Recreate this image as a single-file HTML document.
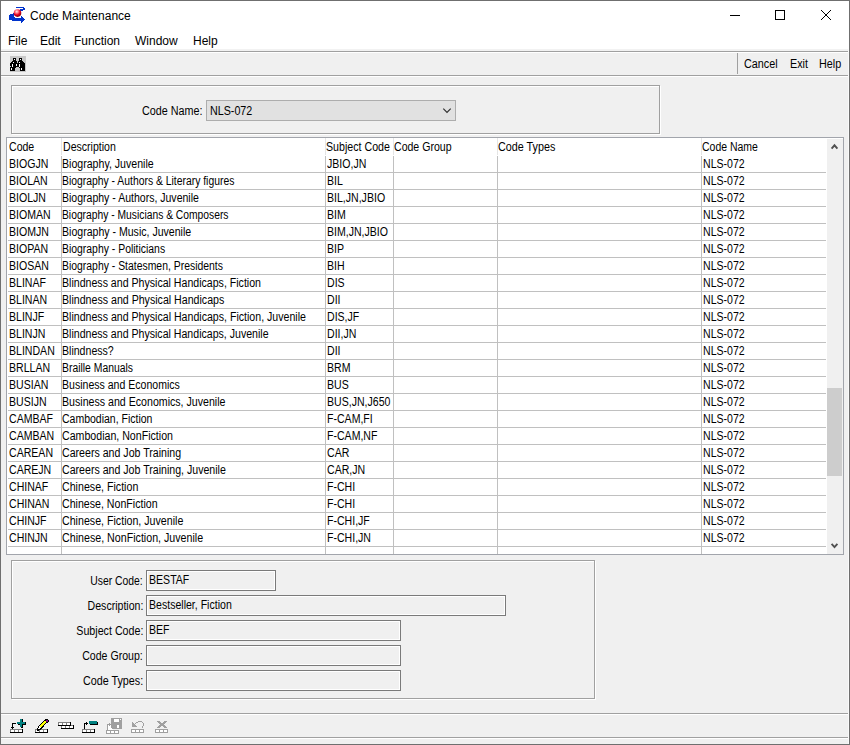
<!DOCTYPE html>
<html><head><meta charset="utf-8"><title>Code Maintenance</title>
<style>
html,body{margin:0;padding:0;}
body{width:850px;height:745px;position:relative;overflow:hidden;background:#f0f0f0;font-family:"Liberation Sans",sans-serif;color:#000;}
div{position:absolute;box-sizing:border-box;}
.t{font-size:12px;line-height:14px;white-space:nowrap;transform:scaleX(0.88);transform-origin:0 0;}
.tr{transform-origin:100% 0;}
.ui{font-size:12px;line-height:14px;white-space:nowrap;}
.win{left:0;top:0;width:850px;height:745px;border:1px solid #6f6f6f;}
.title{left:1px;top:1px;width:848px;height:50px;background:#fff;}
.hl{height:1px;background:#a0a0a0;}
.wl{height:1px;background:#fff;}
.grid{left:6px;top:137px;width:838px;height:418px;border:1px solid #a2a5ac;background:#fff;}
.hsep{top:138px;width:1px;height:17px;background:#e5e5e5;}
.vline{top:156px;width:1px;height:398px;background:#c0c0c0;}
.rline{left:8px;width:818px;height:1px;background:#c0c0c0;}
.sb{left:827px;top:139px;width:16px;height:415px;background:#f0f0f0;}
.thumb{left:827px;top:388px;width:15px;height:88px;background:#cdcdcd;}
.gb{border:1px solid #a0a0a0;}
.gbw{border:1px solid #fff;}
.tb{border:1px solid #7a7a7a;background:#f0f0f0;}
.tbi{border:1px solid #fff;}
</style></head><body>
<div class="title"></div>
<div class="win"></div>
<!-- title -->
<div class="ui" style="left:30px;top:9px">Code Maintenance</div>
<div style="left:730px;top:15px;width:10px;height:1px;background:#000"></div>
<div style="left:775px;top:10px;width:10px;height:10px;border:1px solid #000"></div>
<svg style="position:absolute;left:821px;top:10px" width="10" height="10" shape-rendering="crispEdges" fill="#000"><rect x="0" y="0" width="1" height="1"/><rect x="9" y="0" width="1" height="1"/><rect x="1" y="1" width="1" height="1"/><rect x="8" y="1" width="1" height="1"/><rect x="2" y="2" width="1" height="1"/><rect x="7" y="2" width="1" height="1"/><rect x="3" y="3" width="1" height="1"/><rect x="6" y="3" width="1" height="1"/><rect x="4" y="4" width="1" height="1"/><rect x="5" y="4" width="1" height="1"/><rect x="5" y="5" width="1" height="1"/><rect x="4" y="5" width="1" height="1"/><rect x="6" y="6" width="1" height="1"/><rect x="3" y="6" width="1" height="1"/><rect x="7" y="7" width="1" height="1"/><rect x="2" y="7" width="1" height="1"/><rect x="8" y="8" width="1" height="1"/><rect x="1" y="8" width="1" height="1"/><rect x="9" y="9" width="1" height="1"/><rect x="0" y="9" width="1" height="1"/></svg>
<!-- menu -->
<div class="ui" style="left:8px;top:34px">File</div>
<div class="ui" style="left:40px;top:34px">Edit</div>
<div class="ui" style="left:74px;top:34px">Function</div>
<div class="ui" style="left:135px;top:34px">Window</div>
<div class="ui" style="left:193px;top:34px">Help</div>
<div style="left:1px;top:49px;width:848px;height:2px;background:#f2f2f2"></div>
<div class="hl" style="left:1px;top:51px;width:847px"></div>
<div class="wl" style="left:1px;top:52px;width:847px"></div>
<div style="left:848px;top:49px;width:1px;height:695px;background:#fafafa"></div>
<!-- toolbar -->

<div style="left:737px;top:53px;width:1px;height:21px;background:#a0a0a0"></div>
<div class="t" style="left:744px;top:57px;transform:scaleX(0.9)">Cancel</div>
<div class="t" style="left:790px;top:57px;transform:scaleX(0.9)">Exit</div>
<div class="t" style="left:819px;top:57px;transform:scaleX(0.9)">Help</div>
<div class="hl" style="left:1px;top:75px;width:847px"></div>
<div class="wl" style="left:1px;top:76px;width:847px"></div>
<!-- group 1 -->
<div class="gbw" style="left:12px;top:86px;width:649px;height:49px"></div>
<div class="gb" style="left:11px;top:85px;width:649px;height:49px"></div>
<div class="t" style="left:142px;top:104px;transform:scaleX(0.898)">Code Name:</div>
<div style="left:206px;top:100px;width:250px;height:21px;border:1px solid #adadad;background:#e1e1e1"></div>
<div class="t" style="left:210px;top:104px;transform:scaleX(0.893)">NLS-072</div>

<!-- grid -->
<div class="grid"></div>
<div class="hsep" style="left:61px"></div>
<div class="hsep" style="left:325px"></div>
<div class="hsep" style="left:393px"></div>
<div class="hsep" style="left:497px"></div>
<div class="hsep" style="left:701px"></div>
<div class="vline" style="left:61px"></div>
<div class="vline" style="left:325px"></div>
<div class="vline" style="left:393px"></div>
<div class="vline" style="left:497px"></div>
<div class="vline" style="left:701px"></div>
<div class="rline" style="top:172px"></div>
<div class="rline" style="top:189px"></div>
<div class="rline" style="top:206px"></div>
<div class="rline" style="top:223px"></div>
<div class="rline" style="top:240px"></div>
<div class="rline" style="top:257px"></div>
<div class="rline" style="top:274px"></div>
<div class="rline" style="top:291px"></div>
<div class="rline" style="top:308px"></div>
<div class="rline" style="top:325px"></div>
<div class="rline" style="top:342px"></div>
<div class="rline" style="top:359px"></div>
<div class="rline" style="top:376px"></div>
<div class="rline" style="top:393px"></div>
<div class="rline" style="top:410px"></div>
<div class="rline" style="top:427px"></div>
<div class="rline" style="top:444px"></div>
<div class="rline" style="top:461px"></div>
<div class="rline" style="top:478px"></div>
<div class="rline" style="top:495px"></div>
<div class="rline" style="top:512px"></div>
<div class="rline" style="top:529px"></div>
<div class="rline" style="top:546px"></div>
<div class="t" style="left:8.5px;top:140px">Code</div>
<div class="t" style="left:62.6px;top:140px">Description</div>
<div class="t" style="left:326.3px;top:140px;transform:scaleX(0.887)">Subject Code</div>
<div class="t" style="left:394px;top:140px;transform:scaleX(0.88)">Code Group</div>
<div class="t" style="left:498px;top:140px;transform:scaleX(0.898)">Code Types</div>
<div class="t" style="left:702px;top:140px;transform:scaleX(0.873)">Code Name</div>
<div class="t" style="left:8.9px;top:157px">BIOGJN</div>
<div class="t" style="left:62.42px;top:157px;transform:scaleX(0.8825)">Biography, Juvenile</div>
<div class="t" style="left:326.6px;top:157px">JBIO,JN</div>
<div class="t" style="left:702.5px;top:157px">NLS-072</div>
<div class="t" style="left:8.9px;top:174px">BIOLAN</div>
<div class="t" style="left:62.44px;top:174px;transform:scaleX(0.8641)">Biography - Authors &amp; Literary figures</div>
<div class="t" style="left:326.6px;top:174px">BIL</div>
<div class="t" style="left:702.5px;top:174px">NLS-072</div>
<div class="t" style="left:8.9px;top:191px">BIOLJN</div>
<div class="t" style="left:62.42px;top:191px;transform:scaleX(0.8768)">Biography - Authors, Juvenile</div>
<div class="t" style="left:326.6px;top:191px">BIL,JN,JBIO</div>
<div class="t" style="left:702.5px;top:191px">NLS-072</div>
<div class="t" style="left:8.9px;top:208px">BIOMAN</div>
<div class="t" style="left:62.44px;top:208px;transform:scaleX(0.858)">Biography - Musicians &amp; Composers</div>
<div class="t" style="left:326.6px;top:208px">BIM</div>
<div class="t" style="left:702.5px;top:208px">NLS-072</div>
<div class="t" style="left:8.9px;top:225px">BIOMJN</div>
<div class="t" style="left:62.42px;top:225px;transform:scaleX(0.88)">Biography - Music, Juvenile</div>
<div class="t" style="left:326.6px;top:225px">BIM,JN,JBIO</div>
<div class="t" style="left:702.5px;top:225px">NLS-072</div>
<div class="t" style="left:8.9px;top:242px">BIOPAN</div>
<div class="t" style="left:62.43px;top:242px;transform:scaleX(0.8684)">Biography - Politicians</div>
<div class="t" style="left:326.6px;top:242px">BIP</div>
<div class="t" style="left:702.5px;top:242px">NLS-072</div>
<div class="t" style="left:8.9px;top:259px">BIOSAN</div>
<div class="t" style="left:62.43px;top:259px;transform:scaleX(0.8679)">Biography - Statesmen, Presidents</div>
<div class="t" style="left:326.6px;top:259px">BIH</div>
<div class="t" style="left:702.5px;top:259px">NLS-072</div>
<div class="t" style="left:8.9px;top:276px">BLINAF</div>
<div class="t" style="left:62.42px;top:276px;transform:scaleX(0.8826)">Blindness and Physical Handicaps, Fiction</div>
<div class="t" style="left:326.6px;top:276px">DIS</div>
<div class="t" style="left:702.5px;top:276px">NLS-072</div>
<div class="t" style="left:8.9px;top:293px">BLINAN</div>
<div class="t" style="left:62.42px;top:293px;transform:scaleX(0.8846)">Blindness and Physical Handicaps</div>
<div class="t" style="left:326.6px;top:293px">DII</div>
<div class="t" style="left:702.5px;top:293px">NLS-072</div>
<div class="t" style="left:8.9px;top:310px">BLINJF</div>
<div class="t" style="left:62.42px;top:310px;transform:scaleX(0.8833)">Blindness and Physical Handicaps, Fiction, Juvenile</div>
<div class="t" style="left:326.6px;top:310px">DIS,JF</div>
<div class="t" style="left:702.5px;top:310px">NLS-072</div>
<div class="t" style="left:8.9px;top:327px">BLINJN</div>
<div class="t" style="left:62.42px;top:327px;transform:scaleX(0.8824)">Blindness and Physical Handicaps, Juvenile</div>
<div class="t" style="left:326.6px;top:327px">DII,JN</div>
<div class="t" style="left:702.5px;top:327px">NLS-072</div>
<div class="t" style="left:8.9px;top:344px">BLINDAN</div>
<div class="t" style="left:62.42px;top:344px;transform:scaleX(0.8807)">Blindness?</div>
<div class="t" style="left:326.6px;top:344px">DII</div>
<div class="t" style="left:702.5px;top:344px">NLS-072</div>
<div class="t" style="left:8.9px;top:361px">BRLLAN</div>
<div class="t" style="left:62.43px;top:361px;transform:scaleX(0.8654)">Braille Manuals</div>
<div class="t" style="left:326.6px;top:361px">BRM</div>
<div class="t" style="left:702.5px;top:361px">NLS-072</div>
<div class="t" style="left:8.9px;top:378px">BUSIAN</div>
<div class="t" style="left:62.42px;top:378px;transform:scaleX(0.8789)">Business and Economics</div>
<div class="t" style="left:326.6px;top:378px">BUS</div>
<div class="t" style="left:702.5px;top:378px">NLS-072</div>
<div class="t" style="left:8.9px;top:395px">BUSIJN</div>
<div class="t" style="left:62.42px;top:395px;transform:scaleX(0.8847)">Business and Economics, Juvenile</div>
<div class="t" style="left:326.6px;top:395px">BUS,JN,J650</div>
<div class="t" style="left:702.5px;top:395px">NLS-072</div>
<div class="t" style="left:8.9px;top:412px">CAMBAF</div>
<div class="t" style="left:61.73px;top:412px;transform:scaleX(0.8745)">Cambodian, Fiction</div>
<div class="t" style="left:326.6px;top:412px">F-CAM,FI</div>
<div class="t" style="left:702.5px;top:412px">NLS-072</div>
<div class="t" style="left:8.9px;top:429px">CAMBAN</div>
<div class="t" style="left:61.72px;top:429px;transform:scaleX(0.8847)">Cambodian, NonFiction</div>
<div class="t" style="left:326.6px;top:429px">F-CAM,NF</div>
<div class="t" style="left:702.5px;top:429px">NLS-072</div>
<div class="t" style="left:8.9px;top:446px">CAREAN</div>
<div class="t" style="left:61.72px;top:446px;transform:scaleX(0.8842)">Careers and Job Training</div>
<div class="t" style="left:326.6px;top:446px">CAR</div>
<div class="t" style="left:702.5px;top:446px">NLS-072</div>
<div class="t" style="left:8.9px;top:463px">CAREJN</div>
<div class="t" style="left:61.72px;top:463px;transform:scaleX(0.8837)">Careers and Job Training, Juvenile</div>
<div class="t" style="left:326.6px;top:463px">CAR,JN</div>
<div class="t" style="left:702.5px;top:463px">NLS-072</div>
<div class="t" style="left:8.9px;top:480px">CHINAF</div>
<div class="t" style="left:61.71px;top:480px;transform:scaleX(0.8869)">Chinese, Fiction</div>
<div class="t" style="left:326.6px;top:480px">F-CHI</div>
<div class="t" style="left:702.5px;top:480px">NLS-072</div>
<div class="t" style="left:8.9px;top:497px">CHINAN</div>
<div class="t" style="left:61.71px;top:497px;transform:scaleX(0.885)">Chinese, NonFiction</div>
<div class="t" style="left:326.6px;top:497px">F-CHI</div>
<div class="t" style="left:702.5px;top:497px">NLS-072</div>
<div class="t" style="left:8.9px;top:514px">CHINJF</div>
<div class="t" style="left:61.71px;top:514px;transform:scaleX(0.8874)">Chinese, Fiction, Juvenile</div>
<div class="t" style="left:326.6px;top:514px">F-CHI,JF</div>
<div class="t" style="left:702.5px;top:514px">NLS-072</div>
<div class="t" style="left:8.9px;top:531px">CHINJN</div>
<div class="t" style="left:61.71px;top:531px;transform:scaleX(0.8892)">Chinese, NonFiction, Juvenile</div>
<div class="t" style="left:326.6px;top:531px">F-CHI,JN</div>
<div class="t" style="left:702.5px;top:531px">NLS-072</div>
<div class="sb"></div>
<div class="thumb"></div>


<!-- detail group -->
<div class="gbw" style="left:12px;top:561px;width:584px;height:139px"></div>
<div class="gb" style="left:11px;top:560px;width:584px;height:139px"></div>
<div class="t tr" style="right:707px;top:574px;transform:scaleX(0.865)">User Code:</div>
<div class="t tr" style="right:707px;top:599px">Description:</div>
<div class="t tr" style="right:707px;top:624px;transform:scaleX(0.89)">Subject Code:</div>
<div class="t tr" style="right:707px;top:649px">Code Group:</div>
<div class="t tr" style="right:707px;top:674px;transform:scaleX(0.897)">Code Types:</div>
<div class="tb" style="left:146px;top:570px;width:130px;height:21px"><div class="tbi" style="left:0;top:0;right:0;bottom:0"></div></div>
<div class="tb" style="left:146px;top:595px;width:360px;height:21px"><div class="tbi" style="left:0;top:0;right:0;bottom:0"></div></div>
<div class="tb" style="left:146px;top:620px;width:255px;height:21px"><div class="tbi" style="left:0;top:0;right:0;bottom:0"></div></div>
<div class="tb" style="left:146px;top:645px;width:255px;height:21px"><div class="tbi" style="left:0;top:0;right:0;bottom:0"></div></div>
<div class="tb" style="left:146px;top:670px;width:255px;height:21px"><div class="tbi" style="left:0;top:0;right:0;bottom:0"></div></div>
<div class="t" style="left:149px;top:573px">BESTAF</div>
<div class="t" style="left:149px;top:598px">Bestseller, Fiction</div>
<div class="t" style="left:149px;top:623px">BEF</div>
<!-- bottom toolbar -->
<div class="hl" style="left:1px;top:713px;width:847px"></div>
<div class="wl" style="left:1px;top:714px;width:847px"></div>
<div class="hl" style="left:1px;top:737px;width:847px"></div>
<div class="wl" style="left:1px;top:738px;width:847px"></div>
<svg style="position:absolute;left:8px;top:6px" width="17" height="17" shape-rendering="crispEdges"><rect x="8" y="1" width="8" height="1" fill="#0033cc"/><rect x="15" y="2" width="2" height="1" fill="#0033cc"/><rect x="12" y="3" width="5" height="1" fill="#0033cc"/><rect x="12" y="4" width="3" height="1" fill="#0033cc"/><rect x="5" y="7" width="1" height="1" fill="#0033cc"/><rect x="2" y="8" width="4" height="1" fill="#0033cc"/><rect x="1" y="9" width="5" height="1" fill="#0033cc"/><rect x="1" y="10" width="5" height="1" fill="#0033cc"/><rect x="13" y="10" width="1" height="1" fill="#0033cc"/><rect x="1" y="11" width="6" height="1" fill="#0033cc"/><rect x="13" y="11" width="2" height="1" fill="#0033cc"/><rect x="1" y="12" width="15" height="1" fill="#0033cc"/><rect x="1" y="13" width="16" height="1" fill="#0033cc"/><rect x="4" y="14" width="12" height="1" fill="#0033cc"/><rect x="13" y="15" width="2" height="1" fill="#0033cc"/><rect x="13" y="16" width="1" height="1" fill="#0033cc"/></svg><svg style="position:absolute;left:8px;top:6px" width="20" height="20"><defs><radialGradient id="ball" cx="0.4" cy="0.3" r="0.8"><stop offset="0" stop-color="#ffe8e8"/><stop offset="0.3" stop-color="#ff6a78"/><stop offset="0.55" stop-color="#e00020"/><stop offset="0.85" stop-color="#8a0010"/><stop offset="1" stop-color="#500008"/></radialGradient></defs><circle cx="9.5" cy="7.1" r="3.8" fill="url(#ball)"/></svg><svg style="position:absolute;left:10px;top:56px" width="16" height="16" shape-rendering="crispEdges"><rect x="0" y="0" width="16" height="1" fill="#c8c8c8"/><rect x="0" y="1" width="16" height="1" fill="#c8c8c8"/><rect x="0" y="2" width="3" height="1" fill="#c8c8c8"/><rect x="3" y="2" width="3" height="1" fill="#000000"/><rect x="6" y="2" width="3" height="1" fill="#c8c8c8"/><rect x="9" y="2" width="3" height="1" fill="#000000"/><rect x="12" y="2" width="4" height="1" fill="#c8c8c8"/><rect x="0" y="3" width="3" height="1" fill="#c8c8c8"/><rect x="3" y="3" width="1" height="1" fill="#000000"/><rect x="4" y="3" width="1" height="1" fill="#ffffff"/><rect x="5" y="3" width="1" height="1" fill="#000000"/><rect x="6" y="3" width="3" height="1" fill="#c8c8c8"/><rect x="9" y="3" width="1" height="1" fill="#000000"/><rect x="10" y="3" width="1" height="1" fill="#ffffff"/><rect x="11" y="3" width="1" height="1" fill="#000000"/><rect x="12" y="3" width="4" height="1" fill="#c8c8c8"/><rect x="0" y="4" width="3" height="1" fill="#c8c8c8"/><rect x="3" y="4" width="3" height="1" fill="#000000"/><rect x="6" y="4" width="3" height="1" fill="#c8c8c8"/><rect x="9" y="4" width="3" height="1" fill="#000000"/><rect x="12" y="4" width="4" height="1" fill="#c8c8c8"/><rect x="0" y="5" width="2" height="1" fill="#c8c8c8"/><rect x="2" y="5" width="5" height="1" fill="#000000"/><rect x="7" y="5" width="1" height="1" fill="#c8c8c8"/><rect x="8" y="5" width="5" height="1" fill="#000000"/><rect x="13" y="5" width="3" height="1" fill="#c8c8c8"/><rect x="0" y="6" width="1" height="1" fill="#c8c8c8"/><rect x="1" y="6" width="2" height="1" fill="#000000"/><rect x="3" y="6" width="1" height="1" fill="#ffffff"/><rect x="4" y="6" width="3" height="1" fill="#000000"/><rect x="7" y="6" width="1" height="1" fill="#c8c8c8"/><rect x="8" y="6" width="1" height="1" fill="#000000"/><rect x="9" y="6" width="1" height="1" fill="#ffffff"/><rect x="10" y="6" width="4" height="1" fill="#000000"/><rect x="14" y="6" width="2" height="1" fill="#c8c8c8"/><rect x="0" y="7" width="15" height="1" fill="#000000"/><rect x="15" y="7" width="1" height="1" fill="#c8c8c8"/><rect x="0" y="8" width="2" height="1" fill="#000000"/><rect x="2" y="8" width="1" height="1" fill="#ffffff"/><rect x="3" y="8" width="3" height="1" fill="#000000"/><rect x="6" y="8" width="1" height="1" fill="#ffffff"/><rect x="7" y="8" width="2" height="1" fill="#000000"/><rect x="9" y="8" width="1" height="1" fill="#ffffff"/><rect x="10" y="8" width="5" height="1" fill="#000000"/><rect x="15" y="8" width="1" height="1" fill="#c8c8c8"/><rect x="0" y="9" width="2" height="1" fill="#000000"/><rect x="2" y="9" width="1" height="1" fill="#ffffff"/><rect x="3" y="9" width="3" height="1" fill="#000000"/><rect x="6" y="9" width="1" height="1" fill="#ffffff"/><rect x="7" y="9" width="2" height="1" fill="#000000"/><rect x="9" y="9" width="1" height="1" fill="#ffffff"/><rect x="10" y="9" width="5" height="1" fill="#000000"/><rect x="15" y="9" width="1" height="1" fill="#c8c8c8"/><rect x="0" y="10" width="1" height="1" fill="#c8c8c8"/><rect x="1" y="10" width="1" height="1" fill="#000000"/><rect x="2" y="10" width="1" height="1" fill="#ffffff"/><rect x="3" y="10" width="6" height="1" fill="#000000"/><rect x="9" y="10" width="1" height="1" fill="#ffffff"/><rect x="10" y="10" width="5" height="1" fill="#000000"/><rect x="15" y="10" width="1" height="1" fill="#c8c8c8"/><rect x="0" y="11" width="6" height="1" fill="#000000"/><rect x="6" y="11" width="3" height="1" fill="#c8c8c8"/><rect x="9" y="11" width="6" height="1" fill="#000000"/><rect x="15" y="11" width="1" height="1" fill="#c8c8c8"/><rect x="0" y="12" width="1" height="1" fill="#000000"/><rect x="1" y="12" width="1" height="1" fill="#ffffff"/><rect x="2" y="12" width="3" height="1" fill="#000000"/><rect x="5" y="12" width="5" height="1" fill="#c8c8c8"/><rect x="10" y="12" width="1" height="1" fill="#000000"/><rect x="11" y="12" width="1" height="1" fill="#ffffff"/><rect x="12" y="12" width="3" height="1" fill="#000000"/><rect x="15" y="12" width="1" height="1" fill="#c8c8c8"/><rect x="0" y="13" width="1" height="1" fill="#000000"/><rect x="1" y="13" width="1" height="1" fill="#ffffff"/><rect x="2" y="13" width="3" height="1" fill="#000000"/><rect x="5" y="13" width="5" height="1" fill="#c8c8c8"/><rect x="10" y="13" width="1" height="1" fill="#000000"/><rect x="11" y="13" width="1" height="1" fill="#ffffff"/><rect x="12" y="13" width="3" height="1" fill="#000000"/><rect x="15" y="13" width="1" height="1" fill="#c8c8c8"/><rect x="0" y="14" width="5" height="1" fill="#000000"/><rect x="5" y="14" width="5" height="1" fill="#c8c8c8"/><rect x="10" y="14" width="5" height="1" fill="#000000"/><rect x="15" y="14" width="1" height="1" fill="#c8c8c8"/><rect x="0" y="15" width="16" height="1" fill="#c8c8c8"/></svg><svg style="position:absolute;left:9px;top:717px" width="17" height="16" shape-rendering="crispEdges"><rect x="11" y="2" width="2" height="1" fill="#008080"/><rect x="13" y="2" width="1" height="1" fill="#000000"/><rect x="11" y="3" width="2" height="1" fill="#008080"/><rect x="13" y="3" width="1" height="1" fill="#000000"/><rect x="11" y="4" width="2" height="1" fill="#008080"/><rect x="13" y="4" width="1" height="1" fill="#000000"/><rect x="8" y="5" width="8" height="1" fill="#008080"/><rect x="16" y="5" width="1" height="1" fill="#000000"/><rect x="3" y="6" width="4" height="1" fill="#000000"/><rect x="8" y="6" width="8" height="1" fill="#008080"/><rect x="16" y="6" width="1" height="1" fill="#000000"/><rect x="3" y="7" width="1" height="1" fill="#000000"/><rect x="9" y="7" width="2" height="1" fill="#000000"/><rect x="11" y="7" width="2" height="1" fill="#008080"/><rect x="13" y="7" width="4" height="1" fill="#000000"/><rect x="3" y="8" width="1" height="1" fill="#000000"/><rect x="11" y="8" width="2" height="1" fill="#008080"/><rect x="13" y="8" width="1" height="1" fill="#000000"/><rect x="3" y="9" width="1" height="1" fill="#000000"/><rect x="11" y="9" width="2" height="1" fill="#008080"/><rect x="13" y="9" width="1" height="1" fill="#000000"/><rect x="2" y="10" width="3" height="1" fill="#000000"/><rect x="12" y="10" width="2" height="1" fill="#000000"/><rect x="3" y="11" width="1" height="1" fill="#000000"/><rect x="1" y="12" width="12" height="1" fill="#808080"/><rect x="13" y="12" width="1" height="1" fill="#000000"/><rect x="1" y="13" width="1" height="1" fill="#808080"/><rect x="2" y="13" width="3" height="1" fill="#ffffff"/><rect x="5" y="13" width="1" height="1" fill="#808080"/><rect x="6" y="13" width="3" height="1" fill="#ffffff"/><rect x="9" y="13" width="1" height="1" fill="#808080"/><rect x="10" y="13" width="3" height="1" fill="#ffffff"/><rect x="13" y="13" width="1" height="1" fill="#000000"/><rect x="1" y="14" width="1" height="1" fill="#808080"/><rect x="2" y="14" width="3" height="1" fill="#ffffff"/><rect x="5" y="14" width="1" height="1" fill="#808080"/><rect x="6" y="14" width="3" height="1" fill="#ffffff"/><rect x="9" y="14" width="1" height="1" fill="#808080"/><rect x="10" y="14" width="3" height="1" fill="#ffffff"/><rect x="13" y="14" width="1" height="1" fill="#000000"/><rect x="1" y="15" width="13" height="1" fill="#000000"/></svg><svg style="position:absolute;left:33px;top:717px" width="16" height="16" shape-rendering="crispEdges"><rect x="12" y="2" width="3" height="1" fill="#000000"/><rect x="11" y="3" width="2" height="1" fill="#000000"/><rect x="13" y="3" width="2" height="1" fill="#800080"/><rect x="15" y="3" width="1" height="1" fill="#000000"/><rect x="10" y="4" width="1" height="1" fill="#000000"/><rect x="11" y="4" width="2" height="1" fill="#ffff00"/><rect x="13" y="4" width="2" height="1" fill="#800080"/><rect x="15" y="4" width="1" height="1" fill="#000000"/><rect x="9" y="5" width="1" height="1" fill="#000000"/><rect x="10" y="5" width="3" height="1" fill="#ffff00"/><rect x="13" y="5" width="2" height="1" fill="#000000"/><rect x="8" y="6" width="1" height="1" fill="#000000"/><rect x="9" y="6" width="3" height="1" fill="#ffff00"/><rect x="12" y="6" width="1" height="1" fill="#000000"/><rect x="7" y="7" width="1" height="1" fill="#000000"/><rect x="8" y="7" width="3" height="1" fill="#ffff00"/><rect x="11" y="7" width="1" height="1" fill="#000000"/><rect x="6" y="8" width="1" height="1" fill="#000000"/><rect x="7" y="8" width="3" height="1" fill="#ffff00"/><rect x="10" y="8" width="1" height="1" fill="#000000"/><rect x="5" y="9" width="1" height="1" fill="#000000"/><rect x="6" y="9" width="1" height="1" fill="#ffffff"/><rect x="7" y="9" width="2" height="1" fill="#ffff00"/><rect x="9" y="9" width="2" height="1" fill="#000000"/><rect x="5" y="10" width="1" height="1" fill="#000000"/><rect x="6" y="10" width="2" height="1" fill="#ffffff"/><rect x="8" y="10" width="2" height="1" fill="#000000"/><rect x="4" y="11" width="1" height="1" fill="#000000"/><rect x="5" y="11" width="2" height="1" fill="#ffffff"/><rect x="7" y="11" width="2" height="1" fill="#000000"/><rect x="2" y="12" width="2" height="1" fill="#808080"/><rect x="4" y="12" width="4" height="1" fill="#000000"/><rect x="8" y="12" width="6" height="1" fill="#808080"/><rect x="14" y="12" width="1" height="1" fill="#000000"/><rect x="2" y="13" width="1" height="1" fill="#808080"/><rect x="3" y="13" width="1" height="1" fill="#ffffff"/><rect x="4" y="13" width="2" height="1" fill="#000000"/><rect x="6" y="13" width="1" height="1" fill="#808080"/><rect x="7" y="13" width="3" height="1" fill="#ffffff"/><rect x="10" y="13" width="1" height="1" fill="#808080"/><rect x="11" y="13" width="3" height="1" fill="#ffffff"/><rect x="14" y="13" width="1" height="1" fill="#000000"/><rect x="2" y="14" width="1" height="1" fill="#808080"/><rect x="3" y="14" width="3" height="1" fill="#ffffff"/><rect x="6" y="14" width="1" height="1" fill="#808080"/><rect x="7" y="14" width="3" height="1" fill="#ffffff"/><rect x="10" y="14" width="1" height="1" fill="#808080"/><rect x="11" y="14" width="3" height="1" fill="#ffffff"/><rect x="14" y="14" width="1" height="1" fill="#000000"/><rect x="2" y="15" width="13" height="1" fill="#000000"/></svg><svg style="position:absolute;left:56px;top:719px" width="18" height="10" shape-rendering="crispEdges"><rect x="2" y="3" width="12" height="1" fill="#808080"/><rect x="14" y="3" width="1" height="1" fill="#000000"/><rect x="2" y="4" width="1" height="1" fill="#808080"/><rect x="3" y="4" width="3" height="1" fill="#ffffff"/><rect x="6" y="4" width="1" height="1" fill="#808080"/><rect x="7" y="4" width="3" height="1" fill="#ffffff"/><rect x="10" y="4" width="1" height="1" fill="#808080"/><rect x="11" y="4" width="3" height="1" fill="#ffffff"/><rect x="14" y="4" width="1" height="1" fill="#000000"/><rect x="2" y="5" width="1" height="1" fill="#808080"/><rect x="3" y="5" width="3" height="1" fill="#ffffff"/><rect x="6" y="5" width="1" height="1" fill="#808080"/><rect x="7" y="5" width="3" height="1" fill="#ffffff"/><rect x="10" y="5" width="1" height="1" fill="#808080"/><rect x="11" y="5" width="3" height="1" fill="#ffffff"/><rect x="14" y="5" width="1" height="1" fill="#000000"/><rect x="2" y="6" width="13" height="1" fill="#000000"/><rect x="15" y="6" width="2" height="1" fill="#808080"/><rect x="17" y="6" width="1" height="1" fill="#000000"/><rect x="5" y="7" width="1" height="1" fill="#808080"/><rect x="6" y="7" width="3" height="1" fill="#ffffff"/><rect x="9" y="7" width="1" height="1" fill="#808080"/><rect x="10" y="7" width="3" height="1" fill="#ffffff"/><rect x="13" y="7" width="1" height="1" fill="#808080"/><rect x="14" y="7" width="3" height="1" fill="#ffffff"/><rect x="17" y="7" width="1" height="1" fill="#000000"/><rect x="5" y="8" width="1" height="1" fill="#808080"/><rect x="6" y="8" width="3" height="1" fill="#ffffff"/><rect x="9" y="8" width="1" height="1" fill="#808080"/><rect x="10" y="8" width="3" height="1" fill="#ffffff"/><rect x="13" y="8" width="1" height="1" fill="#808080"/><rect x="14" y="8" width="3" height="1" fill="#ffffff"/><rect x="17" y="8" width="1" height="1" fill="#000000"/><rect x="5" y="9" width="13" height="1" fill="#000000"/></svg><svg style="position:absolute;left:80px;top:717px" width="18" height="16" shape-rendering="crispEdges"><rect x="9" y="4" width="8" height="1" fill="#008080"/><rect x="6" y="5" width="1" height="1" fill="#000000"/><rect x="9" y="5" width="8" height="1" fill="#008080"/><rect x="17" y="5" width="1" height="1" fill="#000000"/><rect x="4" y="6" width="4" height="1" fill="#000000"/><rect x="9" y="6" width="8" height="1" fill="#008080"/><rect x="17" y="6" width="1" height="1" fill="#000000"/><rect x="4" y="7" width="1" height="1" fill="#000000"/><rect x="6" y="7" width="1" height="1" fill="#000000"/><rect x="10" y="7" width="8" height="1" fill="#000000"/><rect x="4" y="8" width="1" height="1" fill="#000000"/><rect x="4" y="9" width="1" height="1" fill="#000000"/><rect x="4" y="10" width="1" height="1" fill="#000000"/><rect x="4" y="11" width="1" height="1" fill="#000000"/><rect x="2" y="12" width="12" height="1" fill="#808080"/><rect x="14" y="12" width="1" height="1" fill="#000000"/><rect x="2" y="13" width="1" height="1" fill="#808080"/><rect x="3" y="13" width="3" height="1" fill="#ffffff"/><rect x="6" y="13" width="1" height="1" fill="#808080"/><rect x="7" y="13" width="3" height="1" fill="#ffffff"/><rect x="10" y="13" width="1" height="1" fill="#808080"/><rect x="11" y="13" width="3" height="1" fill="#ffffff"/><rect x="14" y="13" width="1" height="1" fill="#000000"/><rect x="2" y="14" width="1" height="1" fill="#808080"/><rect x="3" y="14" width="3" height="1" fill="#ffffff"/><rect x="6" y="14" width="1" height="1" fill="#808080"/><rect x="7" y="14" width="3" height="1" fill="#ffffff"/><rect x="10" y="14" width="1" height="1" fill="#808080"/><rect x="11" y="14" width="3" height="1" fill="#ffffff"/><rect x="14" y="14" width="1" height="1" fill="#000000"/><rect x="2" y="15" width="13" height="1" fill="#000000"/></svg><svg style="position:absolute;left:104px;top:716px" width="18" height="18" shape-rendering="crispEdges"><rect x="7" y="2" width="11" height="1" fill="#a0a0a0"/><rect x="7" y="3" width="3" height="1" fill="#a0a0a0"/><rect x="10" y="3" width="5" height="1" fill="#ffffff"/><rect x="15" y="3" width="1" height="1" fill="#a0a0a0"/><rect x="16" y="3" width="1" height="1" fill="#ffffff"/><rect x="17" y="3" width="1" height="1" fill="#a0a0a0"/><rect x="7" y="4" width="3" height="1" fill="#a0a0a0"/><rect x="10" y="4" width="5" height="1" fill="#ffffff"/><rect x="15" y="4" width="3" height="1" fill="#a0a0a0"/><rect x="7" y="5" width="3" height="1" fill="#a0a0a0"/><rect x="10" y="5" width="5" height="1" fill="#ffffff"/><rect x="15" y="5" width="3" height="1" fill="#a0a0a0"/><rect x="7" y="6" width="11" height="1" fill="#a0a0a0"/><rect x="5" y="7" width="1" height="1" fill="#a0a0a0"/><rect x="7" y="7" width="11" height="1" fill="#a0a0a0"/><rect x="3" y="8" width="15" height="1" fill="#a0a0a0"/><rect x="3" y="9" width="1" height="1" fill="#a0a0a0"/><rect x="4" y="9" width="1" height="1" fill="#ffffff"/><rect x="5" y="9" width="1" height="1" fill="#a0a0a0"/><rect x="6" y="9" width="1" height="1" fill="#ffffff"/><rect x="7" y="9" width="6" height="1" fill="#a0a0a0"/><rect x="13" y="9" width="2" height="1" fill="#ffffff"/><rect x="15" y="9" width="3" height="1" fill="#a0a0a0"/><rect x="3" y="10" width="1" height="1" fill="#a0a0a0"/><rect x="4" y="10" width="3" height="1" fill="#ffffff"/><rect x="7" y="10" width="6" height="1" fill="#a0a0a0"/><rect x="13" y="10" width="2" height="1" fill="#ffffff"/><rect x="15" y="10" width="3" height="1" fill="#a0a0a0"/><rect x="3" y="11" width="1" height="1" fill="#a0a0a0"/><rect x="4" y="11" width="3" height="1" fill="#ffffff"/><rect x="7" y="11" width="6" height="1" fill="#a0a0a0"/><rect x="13" y="11" width="2" height="1" fill="#ffffff"/><rect x="15" y="11" width="3" height="1" fill="#a0a0a0"/><rect x="3" y="12" width="1" height="1" fill="#a0a0a0"/><rect x="4" y="12" width="4" height="1" fill="#ffffff"/><rect x="8" y="12" width="10" height="1" fill="#a0a0a0"/><rect x="3" y="13" width="1" height="1" fill="#a0a0a0"/><rect x="4" y="13" width="5" height="1" fill="#ffffff"/><rect x="2" y="14" width="13" height="1" fill="#a0a0a0"/><rect x="2" y="15" width="1" height="1" fill="#a0a0a0"/><rect x="3" y="15" width="3" height="1" fill="#ffffff"/><rect x="6" y="15" width="1" height="1" fill="#a0a0a0"/><rect x="7" y="15" width="3" height="1" fill="#ffffff"/><rect x="10" y="15" width="1" height="1" fill="#a0a0a0"/><rect x="11" y="15" width="3" height="1" fill="#ffffff"/><rect x="14" y="15" width="1" height="1" fill="#a0a0a0"/><rect x="2" y="16" width="1" height="1" fill="#a0a0a0"/><rect x="3" y="16" width="3" height="1" fill="#ffffff"/><rect x="6" y="16" width="1" height="1" fill="#a0a0a0"/><rect x="7" y="16" width="3" height="1" fill="#ffffff"/><rect x="10" y="16" width="1" height="1" fill="#a0a0a0"/><rect x="11" y="16" width="3" height="1" fill="#ffffff"/><rect x="14" y="16" width="1" height="1" fill="#a0a0a0"/><rect x="2" y="17" width="13" height="1" fill="#a0a0a0"/></svg><svg style="position:absolute;left:129px;top:718px" width="15" height="15" shape-rendering="crispEdges"><rect x="9" y="3" width="4" height="1" fill="#a0a0a0"/><rect x="3" y="4" width="1" height="1" fill="#a0a0a0"/><rect x="7" y="4" width="2" height="1" fill="#a0a0a0"/><rect x="13" y="4" width="1" height="1" fill="#a0a0a0"/><rect x="3" y="5" width="2" height="1" fill="#a0a0a0"/><rect x="6" y="5" width="1" height="1" fill="#a0a0a0"/><rect x="14" y="5" width="1" height="1" fill="#a0a0a0"/><rect x="3" y="6" width="3" height="1" fill="#a0a0a0"/><rect x="14" y="6" width="1" height="1" fill="#a0a0a0"/><rect x="3" y="7" width="4" height="1" fill="#a0a0a0"/><rect x="14" y="7" width="1" height="1" fill="#a0a0a0"/><rect x="3" y="8" width="5" height="1" fill="#a0a0a0"/><rect x="13" y="8" width="1" height="1" fill="#a0a0a0"/><rect x="13" y="9" width="1" height="1" fill="#a0a0a0"/><rect x="2" y="11" width="13" height="1" fill="#a0a0a0"/><rect x="2" y="12" width="1" height="1" fill="#a0a0a0"/><rect x="3" y="12" width="3" height="1" fill="#ffffff"/><rect x="6" y="12" width="1" height="1" fill="#a0a0a0"/><rect x="7" y="12" width="3" height="1" fill="#ffffff"/><rect x="10" y="12" width="1" height="1" fill="#a0a0a0"/><rect x="11" y="12" width="3" height="1" fill="#ffffff"/><rect x="14" y="12" width="1" height="1" fill="#a0a0a0"/><rect x="2" y="13" width="1" height="1" fill="#a0a0a0"/><rect x="3" y="13" width="3" height="1" fill="#ffffff"/><rect x="6" y="13" width="1" height="1" fill="#a0a0a0"/><rect x="7" y="13" width="3" height="1" fill="#ffffff"/><rect x="10" y="13" width="1" height="1" fill="#a0a0a0"/><rect x="11" y="13" width="3" height="1" fill="#ffffff"/><rect x="14" y="13" width="1" height="1" fill="#a0a0a0"/><rect x="2" y="14" width="13" height="1" fill="#a0a0a0"/></svg><svg style="position:absolute;left:153px;top:718px" width="15" height="15" shape-rendering="crispEdges"><rect x="4" y="3" width="3" height="1" fill="#a0a0a0"/><rect x="11" y="3" width="3" height="1" fill="#a0a0a0"/><rect x="5" y="4" width="3" height="1" fill="#a0a0a0"/><rect x="10" y="4" width="3" height="1" fill="#a0a0a0"/><rect x="6" y="5" width="6" height="1" fill="#a0a0a0"/><rect x="7" y="6" width="4" height="1" fill="#a0a0a0"/><rect x="6" y="7" width="6" height="1" fill="#a0a0a0"/><rect x="5" y="8" width="3" height="1" fill="#a0a0a0"/><rect x="10" y="8" width="3" height="1" fill="#a0a0a0"/><rect x="4" y="9" width="3" height="1" fill="#a0a0a0"/><rect x="11" y="9" width="3" height="1" fill="#a0a0a0"/><rect x="2" y="11" width="13" height="1" fill="#a0a0a0"/><rect x="2" y="12" width="1" height="1" fill="#a0a0a0"/><rect x="3" y="12" width="3" height="1" fill="#ffffff"/><rect x="6" y="12" width="1" height="1" fill="#a0a0a0"/><rect x="7" y="12" width="3" height="1" fill="#ffffff"/><rect x="10" y="12" width="1" height="1" fill="#a0a0a0"/><rect x="11" y="12" width="3" height="1" fill="#ffffff"/><rect x="14" y="12" width="1" height="1" fill="#a0a0a0"/><rect x="2" y="13" width="1" height="1" fill="#a0a0a0"/><rect x="3" y="13" width="3" height="1" fill="#ffffff"/><rect x="6" y="13" width="1" height="1" fill="#a0a0a0"/><rect x="7" y="13" width="3" height="1" fill="#ffffff"/><rect x="10" y="13" width="1" height="1" fill="#a0a0a0"/><rect x="11" y="13" width="3" height="1" fill="#ffffff"/><rect x="14" y="13" width="1" height="1" fill="#a0a0a0"/><rect x="2" y="14" width="13" height="1" fill="#a0a0a0"/></svg>
<svg style="position:absolute;left:0;top:0" width="850" height="745"><path d="M831.6 148.6L834.5 145.3L837.4 148.6" stroke="#505050" stroke-width="1.9" fill="none"/><path d="M831.6 543.8L834.5 547.1L837.4 543.8" stroke="#505050" stroke-width="1.9" fill="none"/><path d="M443.3 108.6L447 112.3L450.7 108.6" stroke="#303030" stroke-width="1.2" fill="none"/></svg>
</body></html>
